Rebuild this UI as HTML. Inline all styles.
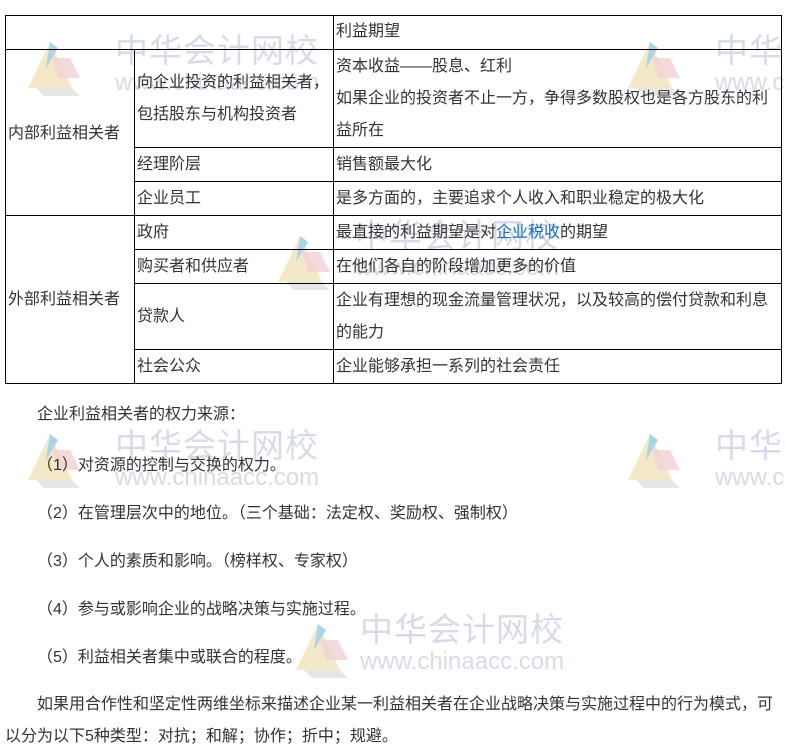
<!DOCTYPE html>
<html><head><meta charset="utf-8"><style>
*{margin:0;padding:0;box-sizing:border-box}
body{width:785px;height:748px;background:#fff;position:relative;overflow:hidden;font-family:"Liberation Sans","Noto Sans CJK SC",sans-serif;font-size:16px;color:#333}
.t{position:absolute;white-space:nowrap;line-height:20px}
.h{position:absolute;background:#000;height:1px}
.v{position:absolute;background:#000;width:1px}
.wm{position:absolute;color:#ccd3e2;white-space:nowrap;opacity:.8}
.wm .a{font-size:33px;letter-spacing:1px;line-height:36px}
.wm .b{font-size:24px;line-height:28px;font-family:"Liberation Sans",sans-serif}
.logo{position:absolute;width:62px;height:60px}
a{color:#1a6fc4;text-decoration:none}
</style></head><body>

<div class="wm" style="left:115px;top:33px"><div class="a">中华会计网校</div><div class="b">www.chinaacc.com</div></div>
<div class="wm" style="left:715px;top:33px"><div class="a">中华会计网校</div><div class="b">www.chinaacc.com</div></div>
<div class="wm" style="left:115px;top:428px"><div class="a">中华会计网校</div><div class="b">www.chinaacc.com</div></div>
<div class="wm" style="left:715px;top:428px"><div class="a">中华会计网校</div><div class="b">www.chinaacc.com</div></div>
<div class="wm" style="left:355px;top:218px"><div class="a">中华会计网校</div><div class="b">www.chinaacc.com</div></div>
<div class="wm" style="left:360px;top:612px"><div class="a">中华会计网校</div><div class="b">www.chinaacc.com</div></div>

<svg class="logo" style="left:22px;top:38px" viewBox="0 0 62 60"><path d="M28 4 L6 50 L50 50 Z" fill="#f3e9c8"/><path d="M28 4 L36 10 L24 30 Z" fill="#a9d4ea"/><path d="M30 20 L48 20 L58 40 L36 40Z" fill="#f1d1d4" opacity=".8"/><path d="M14 50 L50 50 L58 58 L22 58Z" fill="#e6e6e6"/></svg>
<svg class="logo" style="left:622px;top:38px" viewBox="0 0 62 60"><path d="M28 4 L6 50 L50 50 Z" fill="#f3e9c8"/><path d="M28 4 L36 10 L24 30 Z" fill="#a9d4ea"/><path d="M30 20 L48 20 L58 40 L36 40Z" fill="#f1d1d4" opacity=".8"/><path d="M14 50 L50 50 L58 58 L22 58Z" fill="#e6e6e6"/></svg>
<svg class="logo" style="left:272px;top:232px" viewBox="0 0 62 60"><path d="M28 4 L6 50 L50 50 Z" fill="#f3e9c8"/><path d="M28 4 L36 10 L24 30 Z" fill="#a9d4ea"/><path d="M30 20 L48 20 L58 40 L36 40Z" fill="#f1d1d4" opacity=".8"/><path d="M14 50 L50 50 L58 58 L22 58Z" fill="#e6e6e6"/></svg>
<svg class="logo" style="left:22px;top:430px" viewBox="0 0 62 60"><path d="M28 4 L6 50 L50 50 Z" fill="#f3e9c8"/><path d="M28 4 L36 10 L24 30 Z" fill="#a9d4ea"/><path d="M30 20 L48 20 L58 40 L36 40Z" fill="#f1d1d4" opacity=".8"/><path d="M14 50 L50 50 L58 58 L22 58Z" fill="#e6e6e6"/></svg>
<svg class="logo" style="left:622px;top:430px" viewBox="0 0 62 60"><path d="M28 4 L6 50 L50 50 Z" fill="#f3e9c8"/><path d="M28 4 L36 10 L24 30 Z" fill="#a9d4ea"/><path d="M30 20 L48 20 L58 40 L36 40Z" fill="#f1d1d4" opacity=".8"/><path d="M14 50 L50 50 L58 58 L22 58Z" fill="#e6e6e6"/></svg>
<svg class="logo" style="left:290px;top:620px" viewBox="0 0 62 60"><path d="M28 4 L6 50 L50 50 Z" fill="#f3e9c8"/><path d="M28 4 L36 10 L24 30 Z" fill="#a9d4ea"/><path d="M30 20 L48 20 L58 40 L36 40Z" fill="#f1d1d4" opacity=".8"/><path d="M14 50 L50 50 L58 58 L22 58Z" fill="#e6e6e6"/></svg>

<div class="h" style="left:5px;top:15px;width:777px"></div>
<div class="h" style="left:5px;top:49px;width:777px"></div>
<div class="h" style="left:134px;top:147px;width:648px"></div>
<div class="h" style="left:134px;top:181px;width:648px"></div>
<div class="h" style="left:5px;top:215px;width:777px"></div>
<div class="h" style="left:134px;top:249px;width:648px"></div>
<div class="h" style="left:134px;top:283px;width:648px"></div>
<div class="h" style="left:134px;top:349px;width:648px"></div>
<div class="h" style="left:5px;top:383px;width:777px"></div>
<div class="v" style="left:5px;top:15px;height:369px"></div>
<div class="v" style="left:134px;top:49px;height:335px"></div>
<div class="v" style="left:333px;top:15px;height:369px"></div>
<div class="v" style="left:781px;top:15px;height:369px"></div>

<div class="t" style="left:336px;top:22px">利益期望</div>
<div class="t" style="left:8px;top:124px">内部利益相关者</div>
<div class="t" style="left:137px;top:73px">向企业投资的利益相关者，</div>
<div class="t" style="left:137px;top:105px">包括股东与机构投资者</div>
<div class="t" style="left:336px;top:57px">资本收益——股息、红利</div>
<div class="t" style="left:336px;top:89px">如果企业的投资者不止一方，争得多数股权也是各方股东的利</div>
<div class="t" style="left:336px;top:121px">益所在</div>
<div class="t" style="left:137px;top:155px">经理阶层</div>
<div class="t" style="left:336px;top:155px">销售额最大化</div>
<div class="t" style="left:137px;top:189px">企业员工</div>
<div class="t" style="left:336px;top:189px">是多方面的，主要追求个人收入和职业稳定的极大化</div>
<div class="t" style="left:8px;top:290px">外部利益相关者</div>
<div class="t" style="left:137px;top:223px">政府</div>
<div class="t" style="left:336px;top:223px">最直接的利益期望是对<a>企业税收</a>的期望</div>
<div class="t" style="left:137px;top:257px">购买者和供应者</div>
<div class="t" style="left:336px;top:257px">在他们各自的阶段增加更多的价值</div>
<div class="t" style="left:137px;top:307px">贷款人</div>
<div class="t" style="left:336px;top:291px">企业有理想的现金流量管理状况，以及较高的偿付贷款和利息</div>
<div class="t" style="left:336px;top:323px">的能力</div>
<div class="t" style="left:137px;top:357px">社会公众</div>
<div class="t" style="left:336px;top:357px">企业能够承担一系列的社会责任</div>

<div class="t" style="left:37px;top:405px">企业利益相关者的权力来源：</div>
<div class="t" style="left:37px;top:456px">（1）对资源的控制与交换的权力。</div>
<div class="t" style="left:37px;top:504px">（2）在管理层次中的地位。（三个基础：法定权、奖励权、强制权）</div>
<div class="t" style="left:37px;top:552px">（3）个人的素质和影响。（榜样权、专家权）</div>
<div class="t" style="left:37px;top:600px">（4）参与或影响企业的战略决策与实施过程。</div>
<div class="t" style="left:37px;top:648px">（5）利益相关者集中或联合的程度。</div>
<div class="t" style="left:37px;top:695px">如果用合作性和坚定性两维坐标来描述企业某一利益相关者在企业战略决策与实施过程中的行为模式，可</div>
<div class="t" style="left:5px;top:727px">以分为以下5种类型：对抗；和解；协作；折中；规避。</div>
</body></html>
